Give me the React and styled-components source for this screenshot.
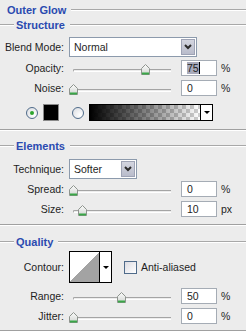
import React from "react";
import styled, { createGlobalStyle } from "styled-components";

const GlobalStyle = createGlobalStyle`
  body {
    margin: 0;
    background: #ececec;
  }
  #root {
    font-family: "Liberation Sans", Arial, sans-serif;
    font-size: 10.5px;
    color: #1e1e1e;
  }
`;

const Panel = styled.div`
  width: 246px;
  height: 332px;
  overflow: hidden;
  background: #ececec;
`;

const Title = styled.div`
  display: flex;
  align-items: center;
  height: 20px;
  padding-left: 7px;
  font-size: 11px;
  font-weight: bold;
  color: #2a4ab0;

  &::after {
    content: "";
    flex: 1;
    margin-left: 5px;
    border-top: 1px solid #a8a8a8;
    border-bottom: 1px solid #fff;
  }
`;

const Group = styled.section`
  border-bottom: 1px solid #a0a0a0;
  box-shadow: 0 1px 0 #fff;
  padding-bottom: ${(p) => p.$pb}px;
`;

const Legend = styled.div`
  display: flex;
  align-items: center;
  height: 10px;
  margin-top: ${(p) => p.$mt || 0}px;
  font-size: 11px;
  font-weight: bold;
  color: #2a4ab0;

  &::before {
    content: "";
    width: 14px;
    margin-right: 2px;
    border-top: 1px solid #a8a8a8;
    border-bottom: 1px solid #fff;
  }
  &::after {
    content: "";
    flex: 1;
    margin-left: 5px;
    border-top: 1px solid #a8a8a8;
    border-bottom: 1px solid #fff;
  }
`;

const Row = styled.div`
  display: flex;
  align-items: center;
  height: ${(p) => p.$h ?? 20}px;
  margin-top: ${(p) => p.$mt ?? 0}px;
`;

const Label = styled.div`
  width: 64px;
  margin-right: 5px;
  text-align: right;
  white-space: nowrap;
`;

const Select = styled.div`
  display: flex;
  box-sizing: border-box;
  width: ${(p) => p.$w}px;
  height: 20px;
  border: 1px solid #8c9aac;
  background: #fff;
`;

const SelectText = styled.span`
  flex: 1;
  padding-left: 4px;
  line-height: 18px;
`;

const SelectButton = styled.span`
  display: flex;
  align-items: center;
  justify-content: center;
  width: 14px;
  margin: 1px;
  background: linear-gradient(#d3d5df, #b9bccb);
  border: 1px solid #9ea3b5;
  box-sizing: border-box;
`;

const Slider = styled.div`
  position: relative;
  width: 106px;
  height: 100%;
`;

const Track = styled.div`
  position: absolute;
  left: 4px;
  top: 11px;
  width: 97px;
  height: 1px;
  border-top: 1px solid #a4a4a4;
  border-bottom: 1px solid #fff;
  border-left: 1px solid #a4a4a4;
  border-radius: 2px 0 0 2px;
`;

const Thumb = styled.svg`
  position: absolute;
  top: 6px;
`;

const Field = styled.div`
  box-sizing: border-box;
  width: 36px;
  height: 16px;
  margin-left: 6px;
  padding-left: 5px;
  border: 1px solid #a5acb5;
  background: #fff;
  line-height: 14px;
`;

const Selected = styled.span`
  background: #a9abbb;
  border-right: 1px solid #000;
`;

const Unit = styled.span`
  margin-left: 4px;
`;

const Radio = styled.span`
  box-sizing: border-box;
  width: 12px;
  height: 12px;
  margin-left: ${(p) => p.$ml}px;
  border: 1px solid #4f6b8a;
  border-radius: 50%;
  background: radial-gradient(circle at 70% 70%, #fff, #d8dbe0);
  display: flex;
  align-items: center;
  justify-content: center;

  &::after {
    content: "";
    display: ${(p) => (p.$on ? "block" : "none")};
    width: 4px;
    height: 4px;
    border-radius: 50%;
    background: #2ea52e;
  }
`;

const Swatch = styled.span`
  box-sizing: border-box;
  width: 16px;
  height: 17px;
  margin-left: 5px;
  background: #000;
  border: 1px solid #8a8a8a;
`;

const GradientBox = styled.div`
  display: flex;
  box-sizing: border-box;
  width: 124px;
  height: 17px;
  margin-left: 5px;
  border: 1px solid #000;
`;

const GradientFill = styled.div`
  flex: 1;
  background:
    linear-gradient(to right, #000, rgba(0, 0, 0, 0)),
    conic-gradient(#cfcfcf 25%, #fff 0 50%, #cfcfcf 0 75%, #fff 0) 0 0 / 8px 8px;
`;

const Arrow = styled.div`
  display: flex;
  align-items: center;
  justify-content: center;
  width: 11px;
  border-left: 1px solid #000;
  background: #fff;

  &::after {
    content: "";
    border-left: 3px solid transparent;
    border-right: 3px solid transparent;
    border-top: 3px solid #000;
  }
`;

const ContourBox = styled.div`
  display: flex;
  box-sizing: border-box;
  width: 43px;
  height: 32px;
  border: 1px solid #000;
  background: #fff;
`;

const ContourCurve = styled.div`
  width: 30px;
  background: linear-gradient(to top left, #a3a3a3 50%, #fff 50%);
`;

const Check = styled.span`
  box-sizing: border-box;
  width: 13px;
  height: 13px;
  margin-left: 12px;
  border: 1px solid #4f6b8a;
  background: linear-gradient(135deg, #dcdce2, #fff);
`;

const CheckLabel = styled.span`
  margin-left: 4px;
`;

function Chevron() {
  return (
    <svg width="8" height="6" viewBox="0 0 8 6">
      <path d="M1 1 L4 4 L7 1" fill="none" stroke="#2b2b2b" strokeWidth="2" />
    </svg>
  );
}

function SliderRow({ label, value, pos, unit = "%", selected, mt = 0 }) {
  const left = 4 + pos * 97 - 4.5;
  return (
    <Row $mt={mt}>
      <Label>{label}</Label>
      <Slider>
        <Track />
        <Thumb width="9" height="11" viewBox="0 0 9 11" style={{ left }}>
          <defs>
            <linearGradient id="tg" x1="0" x2="0" y1="0" y2="1">
              <stop offset="0" stopColor="#fbfbfb" />
              <stop offset="1" stopColor="#d2d6d2" />
            </linearGradient>
          </defs>
          <path
            d="M0.5 10.5 V4.5 L4.5 0.5 L8.5 4.5 V10.5 Z"
            fill="url(#tg)"
            stroke="#8e948e"
          />
          <rect x="1" y="8.5" width="7" height="2" fill="#3aa648" />
        </Thumb>
      </Slider>
      <Field>{selected ? <Selected>{value}</Selected> : value}</Field>
      <Unit>{unit}</Unit>
    </Row>
  );
}

export default function App() {
  return (
    <Panel>
      <GlobalStyle />
      <Title>Outer Glow</Title>

      <Group $pb={8}>
        <Legend>Structure</Legend>
        <Row $mt={7}>
          <Label>Blend Mode:</Label>
          <Select $w={128}>
            <SelectText>Normal</SelectText>
            <SelectButton>
              <Chevron />
            </SelectButton>
          </Select>
        </Row>
        <SliderRow label="Opacity:" value="75" pos={0.75} selected mt={1} />
        <SliderRow label="Noise:" value="0" pos={0} />
        <Row $mt={6} $h={17}>
          <Radio $ml={26} $on />
          <Swatch />
          <Radio $ml={13} />
          <GradientBox>
            <GradientFill />
            <Arrow />
          </GradientBox>
        </Row>
      </Group>

      <Group $pb={5}>
        <Legend $mt={11}>Elements</Legend>
        <Row $mt={8}>
          <Label>Technique:</Label>
          <Select $w={68}>
            <SelectText>Softer</SelectText>
            <SelectButton>
              <Chevron />
            </SelectButton>
          </Select>
        </Row>
        <SliderRow label="Spread:" value="0" pos={0} />
        <SliderRow label="Size:" value="10" pos={0.1} unit="px" />
      </Group>

      <Group $pb={4}>
        <Legend $mt={12}>Quality</Legend>
        <Row $mt={4} $h={32}>
          <Label>Contour:</Label>
          <ContourBox>
            <ContourCurve />
            <Arrow />
          </ContourBox>
          <Check />
          <CheckLabel>Anti-aliased</CheckLabel>
        </Row>
        <SliderRow label="Range:" value="50" pos={0.5} mt={3} />
        <SliderRow label="Jitter:" value="0" pos={0} />
      </Group>
    </Panel>
  );
}
